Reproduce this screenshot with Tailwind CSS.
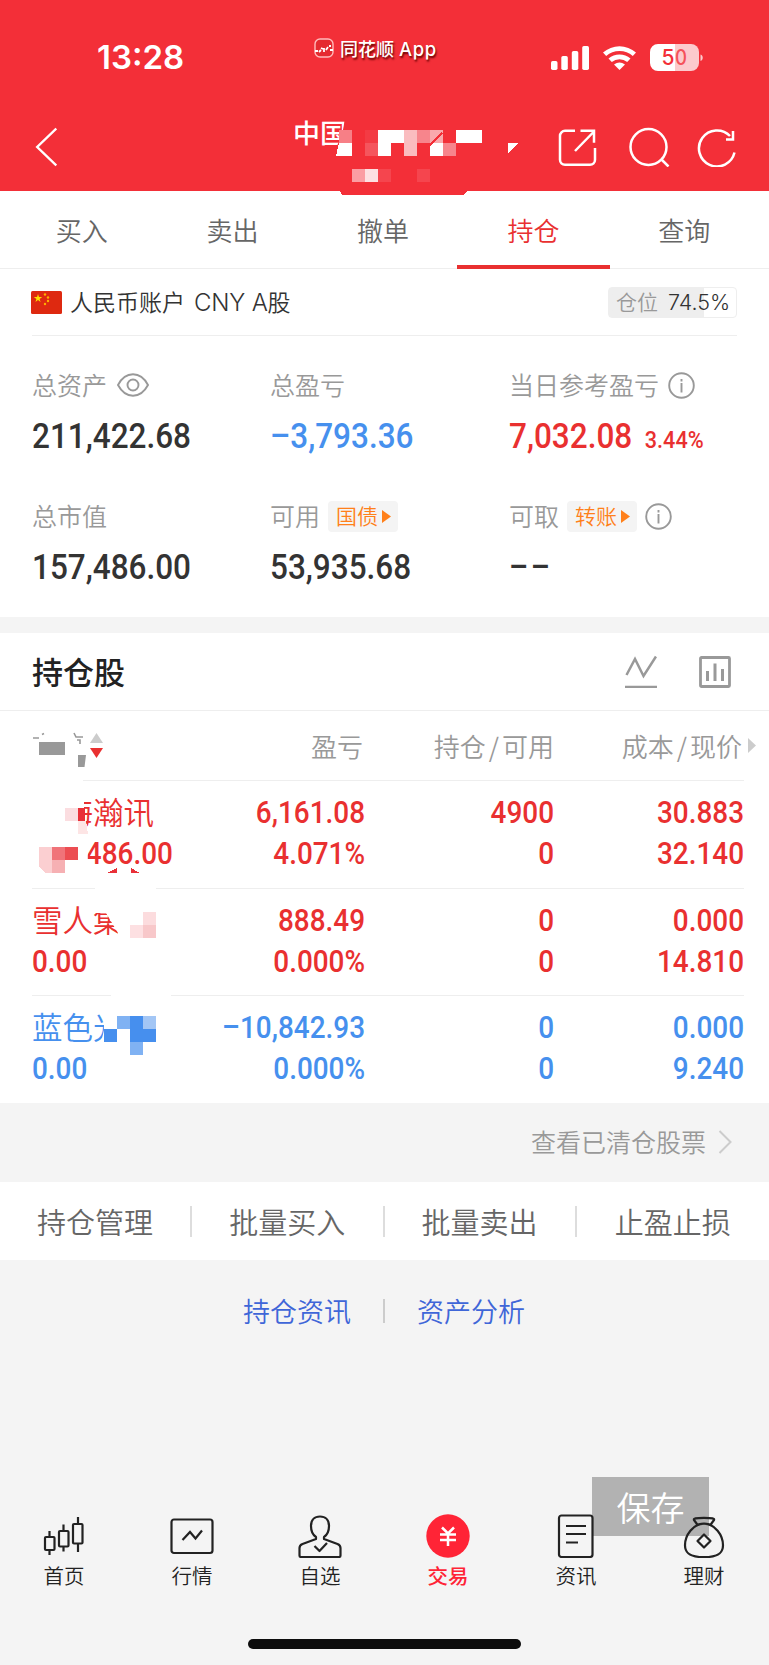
<!DOCTYPE html>
<html lang="zh-CN">
<head>
    <meta charset="UTF-8">
    <meta name="viewport" content="width=device-width, initial-scale=1.0">
    <title>持仓</title>
    <!-- Tailwind CSS -->
    <script src="https://cdn.jsdelivr.net/npm/@tailwindcss/browser@4"></script>
</head>
<body class="relative w-[769px] h-[1665px] overflow-hidden bg-[#f4f4f4] font-['Noto_Sans_CJK_SC',sans-serif] font-[350] text-[#333]">

    <!-- Header -->
    <header class="relative h-[191px] bg-[#f32f38] text-white">
        <div class="flex h-[108px] items-center">
            <div class="w-[314px] pl-[97px] pt-[7px] font-['Inter',sans-serif] text-[33px] font-semibold leading-none">13:28</div>
            <div class="flex w-[237px] items-center gap-[6px] pb-[12px]">
                <svg class="size-[20px]" viewBox="0 0 20 20" fill="none">
                    <rect x="1" y="1" width="18" height="18" rx="5" fill="#e52a30" stroke="#fbb" stroke-width="1.4"/>
                    <path d="M1 13h3M5 14l2-2M7 10l2 1M10 10v4M12 12l2-3M15 8h2M16 12h3" stroke="#fff" stroke-width="1.8"/>
                </svg>
                <span class="whitespace-nowrap pt-[2px] text-[18px] font-medium leading-none [text-shadow:1px_2px_2px_#600]">同花顺<span class="ml-[5px] font-['Inter',sans-serif] text-[18.500px] tracking-[0.6px]">App</span></span>
            </div>
            <svg class="mt-[7px] h-[28px] w-[155px]" viewBox="0 0 155 28" fill="#fff">
                <rect x="0" y="17" width="6.5" height="9" rx="1.7"/>
                <rect x="10.3" y="12" width="6.5" height="14" rx="1.7"/>
                <rect x="20.8" y="7" width="6.5" height="19" rx="1.7"/>
                <rect x="31.2" y="2" width="6.8" height="24" rx="1.7"/>
                <path d="M52 8.500a25 25 0 0 1 33 0l-3.200 3.600a20 20 0 0 0-26.600 0z"/>
                <path d="M57.500 14.500a17 17 0 0 1 22 0l-3.300 3.600a12 12 0 0 0-15.400 0z"/>
                <path d="M63 20.500a9 9 0 0 1 11 0L68.500 26z"/>
                <g transform="translate(8.500 -.5)">
                    <path d="M107.500 0.500h-9a8 8 0 0 0-8 8v11a8 8 0 0 0 8 8h17V.5z"/>
                    <path d="M115.500 0.500h16a8 8 0 0 1 8 8v11a8 8 0 0 1-8 8h-16z" fill="#fccacd"/>
                    <path d="M141 11v6.500c3-1 3-5.500 0-6.500z" fill="#fccacd"/>
                    <text x="102" y="21.500" font-family="Inter" font-size="21" font-weight="500" fill="#f32f38">5</text>
                    <text x="115.500" y="21.500" font-family="Inter" font-size="21" font-weight="500" fill="#f5525a" textLength="12" lengthAdjust="spacingAndGlyphs">0</text>
                </g>
            </svg>
        </div>
        <div class="flex h-[78px] items-center">
            <svg class="ml-[35px] h-[40px] w-[22px]" viewBox="0 0 22 40" fill="none" stroke="#fff" stroke-width="2.400"><path d="M21.300 1.500 2.200 20l19.100 18.500"/></svg>
            <div class="ml-[236px] mb-[30px] w-[52px] whitespace-nowrap text-[27px] font-medium leading-none [clip-path:polygon(0_0,100%_0,95%_55%,85%_100%,0_100%)]">中国</div>
            <svg class="ml-auto mr-[33px] h-[40px] w-[180px]" viewBox="0 0 180 40" fill="none" stroke="#fff" stroke-width="2.500">
                <path d="M19 3.800H9a5 5 0 0 0-5 5v24a5 5 0 0 0 5 5h25a5 5 0 0 0 5-5V21M24.500 3.800H38v12M38 4.500 19 24"/>
                <circle cx="92.500" cy="20" r="18"/>
                <path d="M105 32l7.500 7.500"/>
                <path d="M178.500 25.500A18 18 0 1 1 174 9M177 4v8.500h-7"/>
            </svg>
        </div>
        <!-- Masked account name -->
        <svg class="absolute left-[330px] top-[120px] h-[75px] w-[200px]" viewBox="0 0 200 75" shape-rendering="crispEdges">
            <path d="M10 71h127l-4 4H12z" fill="#f32f38"/>
            <path d="M9 10h13v13H9z" fill="#f77f86"/>
            <path d="M9 23h13v13H6zM48 10h26v13H61v13H48zM100 23h13v13h-13zM126 10h26v13h-26z" fill="#fff"/>
            <path d="M35 10h13v13H35z" fill="#f33b44"/>
            <path d="M35 23h13v13H35z" fill="#f5555d"/>
            <path d="M74 10h13v26H74z" fill="#fabcbf"/>
            <path d="M87 10h13v13H87zM113 23h13v13h-13z" fill="#f7858c"/>
            <path d="M100 10h13v13h-13z" fill="#f9a9ad"/>
            <path d="M22 49h13v13H22z" fill="#fb9da3"/>
            <path d="M35 49h13v13H35z" fill="#fde0e2"/>
            <path d="M48 49h13v13H48zM87 49h13v13H87z" fill="#f5454e"/>
            <path d="M99 26l13-13" stroke="#f32f38" stroke-width="1.500"/>
            <path d="M178 23h10l-10 11z" fill="#fff"/>
        </svg>
    </header>

    <!-- Tabs -->
    <nav class="flex h-[78px] border-b border-[#eee] bg-white pl-[7px] pr-[9px] text-[26px] text-[#666]">
        <div class="flex flex-1 items-center justify-center pr-px">买入</div>
        <div class="flex flex-1 items-center justify-center pr-px">卖出</div>
        <div class="flex flex-1 items-center justify-center pr-px">撤单</div>
        <div class="relative flex flex-1 items-center justify-center pr-px text-[#e93030]">持仓<span class="absolute -bottom-px -left-[2px] -right-px h-[4px] bg-[#e93030]"></span></div>
        <div class="flex flex-1 items-center justify-center pr-px">查询</div>
    </nav>

    <!-- Account summary -->
    <section class="h-[348px] bg-white px-[32px]">
        <div class="flex h-[67px] items-center border-b border-[#eee]">
            <svg class="-ml-px h-[23px] w-[31px]" viewBox="0 0 31 23">
                <rect width="31" height="23" rx="1.500" fill="#de2910"/>
                <path d="M7 3l1 3h3.200L8.600 7.900l1 3L7 9.100l-2.600 1.800 1-3L2.800 6H6z" fill="#ffde00"/>
                <g fill="#ffb000"><circle cx="14" cy="3.500" r="1.200"/><circle cx="17" cy="6.500" r="1.200"/><circle cx="17" cy="10" r="1.200"/><circle cx="14" cy="13" r="1.200"/></g>
            </svg>
            <div class="ml-[8px] text-[23px]">人民币账户<span class="ml-[9px] font-['Inter',sans-serif] text-[24px] tracking-[-0.200px]">CNY A</span>股</div>
            <div class="ml-auto flex h-[31px] w-[129px] items-center rounded border border-[#eee] bg-linear-to-r from-[#eee] from-75% to-white to-75% pl-[7px]">
                <span class="text-[21px] text-[#999]">仓位</span>
                <span class="ml-[10px] font-['Inter',sans-serif] text-[21.500px]">74.5%</span>
            </div>
        </div>
        <div class="grid grid-cols-[238px_239px_1fr] text-[25px] text-[#999]">
            <div class="h-[131px] pt-[33px]">
                <div class="flex h-[32px] items-center">总资产
                    <svg class="ml-[10px] h-[24px] w-[32px]" viewBox="0 0 32 24" fill="none" stroke="#999" stroke-width="1.900"><path d="M1 12C5 4.500 10 1.300 16 1.300S27 4.500 31 12c-4 7.500-9 10.700-15 10.700S5 19.500 1 12z"/><circle cx="16" cy="12" r="5.500"/></svg>
                </div>
                <div class="mt-[18px] h-[36px] origin-left scale-x-90 whitespace-nowrap font-['Roboto',sans-serif] text-[35px] font-medium leading-[36px] text-[#333]">211,422.68</div>
            </div>
            <div class="h-[131px] pt-[33px]">
                <div class="flex h-[32px] items-center">总盈亏</div>
                <div class="mt-[18px] h-[36px] origin-left scale-x-90 whitespace-nowrap font-['Roboto',sans-serif] text-[35px] font-medium leading-[36px] text-[#4690ee]">–3,793.36</div>
            </div>
            <div class="h-[131px] pt-[33px]">
                <div class="flex h-[32px] items-center">当日参考盈亏
                    <svg class="ml-[9px] size-[27px]" viewBox="0 0 27 27" fill="none" stroke="#999" stroke-width="1.900"><circle cx="13.500" cy="13.500" r="12.300"/><path d="M13.500 7v2.500M13.500 11v9.500"/></svg>
                </div>
                <div class="mt-[18px] flex h-[36px] origin-left scale-x-90 items-baseline whitespace-nowrap font-['Roboto',sans-serif] text-[35px] font-medium leading-[36px] text-[#e93030]">7,032.08<span class="ml-[14px] text-[24px]">3.44%</span></div>
            </div>
            <div class="pt-[33px]">
                <div class="flex h-[32px] items-center">总市值</div>
                <div class="mt-[18px] h-[36px] origin-left scale-x-90 whitespace-nowrap font-['Roboto',sans-serif] text-[35px] font-medium leading-[36px] text-[#333]">157,486.00</div>
            </div>
            <div class="pt-[33px]">
                <div class="flex h-[32px] items-center">可用
                    <span class="ml-[8px] flex h-[31px] w-[70px] items-center rounded bg-[#f4f4f4] pl-[8px] text-[21px] text-[#ff801a]">国债<svg class="ml-[4px] h-[13px] w-[9px]" viewBox="0 0 9 13" fill="#ff801a"><path d="M0 0l9 6.500L0 13z"/></svg></span>
                </div>
                <div class="mt-[18px] h-[36px] origin-left scale-x-90 whitespace-nowrap font-['Roboto',sans-serif] text-[35px] font-medium leading-[36px] text-[#333]">53,935.68</div>
            </div>
            <div class="pt-[33px]">
                <div class="flex h-[32px] items-center">可取
                    <span class="ml-[8px] flex h-[31px] w-[70px] items-center rounded bg-[#f4f4f4] pl-[8px] text-[21px] text-[#ff801a]">转账<svg class="ml-[4px] h-[13px] w-[9px]" viewBox="0 0 9 13" fill="#ff801a"><path d="M0 0l9 6.500L0 13z"/></svg></span>
                    <svg class="ml-[8px] size-[27px]" viewBox="0 0 27 27" fill="none" stroke="#999" stroke-width="1.900"><circle cx="13.500" cy="13.500" r="12.300"/><path d="M13.500 7v2.500M13.500 11v9.500"/></svg>
                </div>
                <div class="mt-[18px] h-[36px] origin-left scale-x-85 whitespace-nowrap font-['Roboto',sans-serif] text-[35px] font-medium leading-[36px] tracking-[3px] text-[#333]">––</div>
            </div>
        </div>
    </section>

    <!-- Holdings -->
    <section class="relative mt-[16px] h-[470px] bg-white">
        <div class="flex h-[78px] items-center border-b border-[#eee] px-[32px]">
            <h2 class="text-[31px] font-medium text-[#222]">持仓股</h2>
            <svg class="ml-auto h-[33px] w-[32px]" viewBox="0 0 32 33" fill="none" stroke="#999" stroke-width="2.500"><path d="M1.500 20 10 4l8.500 17L31 1.500M0 32h32"/></svg>
            <svg class="ml-[42px] mr-[6px] size-[32px]" viewBox="0 0 32 32" fill="none" stroke="#999" stroke-width="2.800"><rect x="1.500" y="1.500" width="29" height="29" rx="1"/><path d="M8.500 15v10M16 7.500V25M23.500 13v12" stroke-width="3"/></svg>
        </div>
        <div class="ml-[32px] grid h-[70px] w-[712px] grid-cols-[140px_192px_190px_190px] items-center border-b border-[#eee] text-right text-[26px] text-[#999]">
            <svg class="mt-[7px] h-[36px] w-[76px]" viewBox="0 0 76 36">
                <path d="M1 7h6M10 3.500l2-1M42 2l2 4h7M45 9h3v4" stroke="#999" stroke-width="1.600" fill="none"/>
                <path d="M7 11h26v13H7zM46 24h8l-1.500 12H46z" fill="#999"/>
                <path d="M58 12l6.500-10L71 12z" fill="#ccc"/>
                <path d="M58 17l6.500 10L71 17z" fill="#e93030"/>
            </svg>
            <div class="pr-px">盈亏</div>
            <div>持仓<span class="mx-[3px]">/</span>可用</div>
            <div class="pr-[2px]">成本<span class="mx-[3px]">/</span>现价</div>
        </div>
        <div class="ml-[32px] grid h-[108px] w-[712px] grid-cols-[140px_193px_189px_190px] grid-rows-[41px_41px] border-b border-[#eee] pt-[11px] text-right font-['Roboto',sans-serif] text-[31px] font-medium leading-[41px] text-[#e93030]">
            <div class="-mt-px whitespace-nowrap text-left font-['Noto_Sans_CJK_SC',sans-serif] font-[350] text-[30.500px] [clip-path:inset(0_0_0_52px)]">上海瀚讯</div>
            <div class="origin-right scale-x-90">6,161.08</div>
            <div class="origin-right scale-x-90">4900</div>
            <div class="origin-right scale-x-90">30.883</div>
            <div class="origin-left scale-x-90 whitespace-nowrap text-left [clip-path:inset(0_-20px_0_62px)]">157,486.00</div>
            <div class="origin-right scale-x-90">4.071%</div>
            <div class="origin-right scale-x-90">0</div>
            <div class="origin-right scale-x-90">32.140</div>
        </div>
        <div class="ml-[32px] grid h-[107px] w-[712px] grid-cols-[140px_193px_189px_190px] grid-rows-[41px_41px] border-b border-[#eee] pt-[11px] text-right font-['Roboto',sans-serif] text-[31px] font-medium leading-[41px] text-[#e93030]">
            <div class="-mt-px whitespace-nowrap text-left font-['Noto_Sans_CJK_SC',sans-serif] font-[350] text-[30.500px] [clip-path:polygon(0_0,62px_0,62px_14px,74px_14px,86px_34px,86px_41px,0_41px)]">雪人集团</div>
            <div class="origin-right scale-x-90">888.49</div>
            <div class="origin-right scale-x-90">0</div>
            <div class="origin-right scale-x-90">0.000</div>
            <div class="origin-left scale-x-90 text-left">0.00</div>
            <div class="origin-right scale-x-90">0.000%</div>
            <div class="origin-right scale-x-90">0</div>
            <div class="origin-right scale-x-90">14.810</div>
        </div>
        <div class="ml-[32px] grid h-[107px] w-[712px] grid-cols-[140px_193px_189px_190px] grid-rows-[41px_41px] pt-[11px] text-right font-['Roboto',sans-serif] text-[31px] font-medium leading-[41px] text-[#4690ee]">
            <div class="-mt-px whitespace-nowrap text-left font-['Noto_Sans_CJK_SC',sans-serif] font-[350] text-[30.500px] [clip-path:polygon(0_0,72px_0,72px_24px,68px_41px,0_41px)]">蓝色光标</div>
            <div class="origin-right scale-x-90">–10,842.93</div>
            <div class="origin-right scale-x-90">0</div>
            <div class="origin-right scale-x-90">0.000</div>
            <div class="origin-left scale-x-90 text-left">0.00</div>
            <div class="origin-right scale-x-90">0.000%</div>
            <div class="origin-right scale-x-90">0</div>
            <div class="origin-right scale-x-90">9.240</div>
        </div>
        <svg class="absolute left-[748px] top-[105px] h-[15px] w-[9px]" viewBox="0 0 9 15" fill="#ccc"><path d="M0 0l8 7.500L0 15z"/></svg>
        <!-- Masked stock names -->
        <svg class="absolute left-0 top-[140px] h-[330px] w-[180px]" viewBox="0 773 180 330" shape-rendering="crispEdges">
            <path d="M31 778h52v5H31zM95 886h61v5H95zM111 993h60v5h-60z" fill="#fff"/>
            <path d="M65 808h13v13H65z" fill="#fbdde0"/>
            <path d="M78 808h7v13h-7zM107 873l10-5v5zM131 868l9 5h-9z" fill="#e93038"/>
            <path d="M78 821h8l2 13H78z" fill="#fde5e5"/>
            <path d="M39 847h13v26h-6l-7-6z" fill="#fbcfd1"/>
            <path d="M52 847h13v13H52z" fill="#f07379"/>
            <path d="M65 847h13v13H65z" fill="#ec4d52"/>
            <path d="M52 860h13v13H52z" fill="#f6b0b3"/>
            <path d="M143 912h13v13h-13z" fill="#fcdcde"/>
            <path d="M130 925h13v13h-13z" fill="#fde0e2"/>
            <path d="M143 925h13v13h-13z" fill="#f8c8ca"/>
            <path d="M104 1029h13v13h-13zM130 1016h13v13h13v13h-26z" fill="#468fee"/>
            <path d="M117 1016h13v13h-13zM130 1042h13v13h-13z" fill="#80b2f3"/>
            <path d="M143 1016h13v13h-13z" fill="#a3c6f5"/>
        </svg>
    </section>

    <div class="flex h-[79px] items-center justify-end pb-px pr-[37px] text-[25px] text-[#999]">查看已清仓股票
        <svg class="ml-[12px] h-[24px] w-[14px]" viewBox="0 0 14 24" fill="none" stroke="#ccc" stroke-width="2"><path d="M1.500 1 12.500 12l-11 11"/></svg>
    </div>

    <!-- Actions -->
    <div class="grid h-[78px] grid-cols-4 items-center bg-white text-center text-[29px] leading-[31px] text-[#666]">
        <div class="border-r-2 border-[#ddd]">持仓管理</div>
        <div class="border-r-2 border-[#ddd]">批量买入</div>
        <div class="border-r-2 border-[#ddd]">批量卖出</div>
        <div>止盈止损</div>
    </div>
    <div class="mt-[39px] flex h-[24px] items-center justify-center pr-px text-[27px] leading-[24px] text-[#3f66d8]">
        <span>持仓资讯</span><span class="mx-[32px] h-[24px] w-[2px] bg-[#ccc]"></span><span>资产分析</span>
    </div>

    <!-- Save button -->
    <button class="absolute left-[592px] top-[1477px] h-[59px] w-[117px] bg-[#b2b2b2] text-[34px] leading-[56px] text-white">保存</button>

    <!-- Bottom navigation -->
    <nav class="absolute bottom-0 left-0 grid h-[151px] w-[768px] grid-cols-6 text-center text-[20.500px] leading-[30px] text-[#222]">
        <div class="flex flex-col items-center">
            <svg class="size-[44px]" viewBox="0 0 44 44" fill="none" stroke="#222" stroke-width="2.200"><path d="M7.500 17v5M7.500 36v5M21.500 10.500v6M21.500 32.500v5M36 3v7M36 29.500V38"/><rect x="3" y="23" width="9.500" height="13" rx="1"/><rect x="17" y="17" width="9.500" height="15.500" rx="1"/><rect x="31" y="10" width="9.500" height="19.500" rx="1"/></svg>
            <div class="mt-[2px]">首页</div>
        </div>
        <div class="flex flex-col items-center">
            <svg class="size-[44px]" viewBox="0 0 44 44" fill="none" stroke="#222" stroke-width="2.200"><rect x="1.500" y="5.500" width="41" height="33.500" rx="2.500"/><path d="M12.500 26 20 18l5.500 6.500L32 16.500"/></svg>
            <div class="mt-[2px]">行情</div>
        </div>
        <div class="flex flex-col items-center">
            <svg class="size-[44px]" viewBox="0 0 44 44" fill="none" stroke="#222" stroke-width="2.200" stroke-linejoin="round"><path d="M18 25v-2c-3-2-5-6-5-11 0-6 3.500-9.500 9-9.500s9 3.500 9 9.500c0 5-2 9-5 11v2l13.500 5c2 .8 3 2 3 4v7.500c0 1-.7 1.500-1.500 1.500h-38c-.8 0-1.500-.5-1.500-1.500V34c0-2 1-3.200 3-4z"/><path d="M16.500 32l5 5 7.500-8"/></svg>
            <div class="mt-[2px]">自选</div>
        </div>
        <div class="flex flex-col items-center font-medium text-[#ff2436]">
            <svg class="size-[44px]" viewBox="0 0 44 44" fill="none" stroke="#fff" stroke-width="2.500"><circle cx="22" cy="22" r="21.700" fill="#ff2436" stroke="none"/><path d="M16 13.500l6 6 6-6M14 20.500h16M14 26h16M22 19.500V32"/></svg>
            <div class="mt-[2px]">交易</div>
        </div>
        <div class="flex flex-col items-center">
            <svg class="size-[44px]" viewBox="0 0 44 44" fill="none" stroke="#222" stroke-width="2.200"><rect x="5" y="1.500" width="33.500" height="41.500" rx="2.500" fill="#f4f4f4"/><path d="M12 12h20M12 20h20M12 28.500h12"/></svg>
            <div class="mt-[2px]">资讯</div>
        </div>
        <div class="flex flex-col items-center">
            <svg class="size-[44px]" viewBox="0 0 44 44" fill="none" stroke="#222" stroke-width="2.200" stroke-linejoin="round"><path d="M16 11.500 12 6c-.7-1.500 1.500-2.200 10-2.200S32.700 4.500 32 6l-4 5.500"/><path d="M22 10.500C11 10.500 3 22 3 32c0 8 5 12 19 12s19-4 19-12c0-10-8-21.500-19-21.500z" transform="translate(0 -.8)"/><path d="M22 20.500l6.500 6.500-6.500 6.500-6.500-6.500z"/></svg>
            <div class="mt-[2px]">理财</div>
        </div>
    </nav>
    <div class="absolute bottom-[16px] left-[248px] h-[10px] w-[273px] rounded-full bg-[#0d0d0d]"></div>
</body>
</html>
